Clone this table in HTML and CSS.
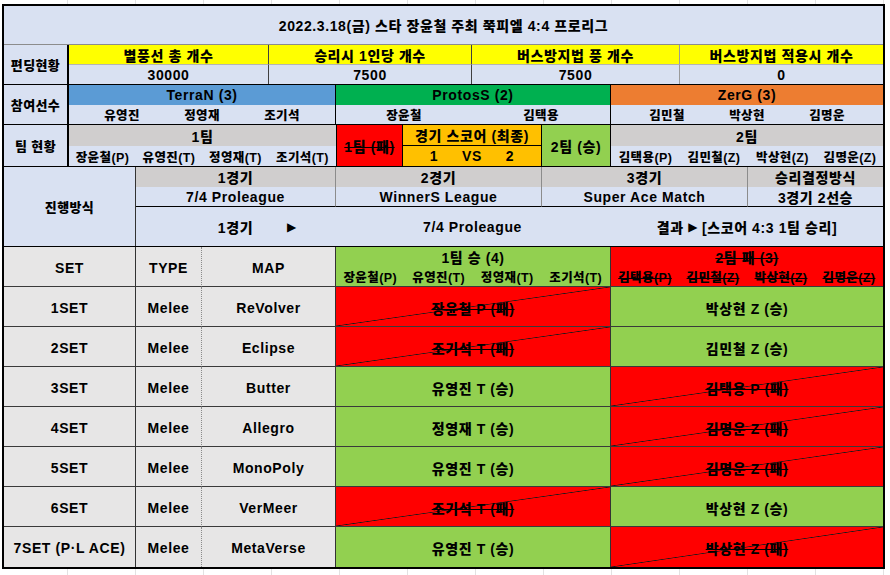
FILE: index.html
```html
<!DOCTYPE html>
<html lang="ko">
<head>
<meta charset="utf-8">
<title>쭉피엘 4:4 프로리그</title>
<link rel="stylesheet" href="styles.css">
</head>
<body>
<div class="sheet">
  <div class="title">2022.3.18(금) 스타 장윤철 주최 쭉피엘 4:4 프로리그</div>

  <div class="band h40">
    <div class="label">편딩현황</div>
    <div class="grid g12 rows-a">
      <div class="cell s3 yellow sep">별풍선 총 개수</div>
      <div class="cell s3 yellow sep">승리시 1인당 개수</div>
      <div class="cell s3 yellow sep-l">버스방지법 풍 개수</div>
      <div class="cell s3 yellow">버스방지법 적용시 개수</div>
      <div class="cell s3 sep">30000</div>
      <div class="cell s3 sep">7500</div>
      <div class="cell s3 sep-l">7500</div>
      <div class="cell s3">0</div>
    </div>
  </div>

  <div class="band h40">
    <div class="label">참여선수</div>
    <div class="grid g12 rows-a">
      <div class="cell s4 terran sep-k">TerraN (3)</div>
      <div class="cell s4 protoss sep-k">ProtosS (2)</div>
      <div class="cell s4 zerg">ZerG (3)</div>
      <div class="cell s4 trio nm sep-k"><span>유영진</span><span>정영재</span><span>조기석</span></div>
      <div class="cell s2 nm">장윤철</div>
      <div class="cell s2 nm sep-k">김택용</div>
      <div class="cell s4 trio nm"><span>김민철</span><span>박상현</span><span>김명운</span></div>
    </div>
  </div>

  <div class="band h42">
    <div class="label">팀 현황</div>
    <div class="grid g12 rows-b">
      <div class="cell s4 gray">1팀</div>
      <div class="cell rs2 red box-l"><span class="strike">1팀 (패)</span></div>
      <div class="cell s2 orange box score-hd">경기 스코어 (최종)</div>
      <div class="cell rs2 green box">2팀 (승)</div>
      <div class="cell s4 gray">2팀</div>
      <div class="cell nm">장윤철(P)</div>
      <div class="cell nm">유영진(T)</div>
      <div class="cell nm">정영재(T)</div>
      <div class="cell nm">조기석(T)</div>
      <div class="cell s2 orange box vs"><span>1</span><span>VS</span><span>2</span></div>
      <div class="cell nm">김택용(P)</div>
      <div class="cell nm">김민철(Z)</div>
      <div class="cell nm">박상현(Z)</div>
      <div class="cell nm">김명운(Z)</div>
    </div>
  </div>

  <div class="band h80">
    <div class="label wide">진행방식</div>
    <div class="grid g11 rows-c">
      <div class="cell s3 gray sep-g">1경기</div>
      <div class="cell s3 gray sep-g">2경기</div>
      <div class="cell s3 gray sep-g">3경기</div>
      <div class="cell s2 gray">승리결정방식</div>
      <div class="cell s3 sep-g line-k">7/4 Proleague</div>
      <div class="cell s3 sep-g line-k">WinnerS League</div>
      <div class="cell s3 sep-g line-k">Super Ace Match</div>
      <div class="cell s2 line-k">3경기 2선승</div>
      <div class="cell"></div>
      <div class="cell">1경기</div>
      <div class="cell arrow-cell"><span class="tri">▶</span></div>
      <div class="cell"></div>
      <div class="cell s2">7/4 Proleague</div>
      <div class="cell"></div>
      <div class="cell s4">결과&nbsp;<span class="tri">▶</span>&nbsp;[스코어 4:3 1팀 승리]</div>
    </div>
  </div>

  <div class="sets">
    <div class="cell c-set">SET</div>
    <div class="cell c-type">TYPE</div>
    <div class="cell c-map">MAP</div>
    <div class="cell t1 green team-hd">
      <div class="th">1팀 승 (4)</div>
      <div class="names4 nm"><span>장윤철(P)</span><span>유영진(T)</span><span>정영재(T)</span><span>조기석(T)</span></div>
    </div>
    <div class="cell red team-hd">
      <div class="th"><span class="strike">2팀 패 (3)</span></div>
      <div class="names4 nm"><span class="strike">김택용(P)</span><span class="strike">김민철(Z)</span><span class="strike">박상현(Z)</span><span class="strike">김명운(Z)</span></div>
    </div>

    <div class="cell c-set">1SET</div>
    <div class="cell c-type">Melee</div>
    <div class="cell c-map">ReVolver</div>
    <div class="cell t1 loss"><span class="strike">장윤철 P (패)</span></div>
    <div class="cell win">박상현 Z (승)</div>

    <div class="cell c-set">2SET</div>
    <div class="cell c-type">Melee</div>
    <div class="cell c-map">Eclipse</div>
    <div class="cell t1 loss"><span class="strike">조기석 T (패)</span></div>
    <div class="cell win">김민철 Z (승)</div>

    <div class="cell c-set">3SET</div>
    <div class="cell c-type">Melee</div>
    <div class="cell c-map">Butter</div>
    <div class="cell t1 win">유영진 T (승)</div>
    <div class="cell loss"><span class="strike">김택용 P (패)</span></div>

    <div class="cell c-set">4SET</div>
    <div class="cell c-type">Melee</div>
    <div class="cell c-map">Allegro</div>
    <div class="cell t1 win">정영재 T (승)</div>
    <div class="cell loss"><span class="strike">김명운 Z (패)</span></div>

    <div class="cell c-set">5SET</div>
    <div class="cell c-type">Melee</div>
    <div class="cell c-map">MonoPoly</div>
    <div class="cell t1 win">유영진 T (승)</div>
    <div class="cell loss"><span class="strike">김명운 Z (패)</span></div>

    <div class="cell c-set">6SET</div>
    <div class="cell c-type">Melee</div>
    <div class="cell c-map">VerMeer</div>
    <div class="cell t1 loss"><span class="strike">조기석 T (패)</span></div>
    <div class="cell win">박상현 Z (승)</div>

    <div class="cell c-set last">7SET (P·L ACE)</div>
    <div class="cell c-type last">Melee</div>
    <div class="cell c-map last">MetaVerse</div>
    <div class="cell t1 win last">유영진 T (승)</div>
    <div class="cell loss last"><span class="strike">박상현 Z (패)</span></div>
  </div>
</div>
</body>
</html>
```

FILE: styles.css
```css
* { box-sizing: border-box; margin: 0; padding: 0; }
html { background: #ffffff; }
body {
  width: 890px;
  height: 575px;
  overflow: hidden;
  padding-top: 4px;
  background: repeating-linear-gradient(to right, transparent 0 67px, #e2e2e2 67px 68px);
  font-family: "Liberation Sans", "Noto Sans CJK KR", sans-serif;
  font-weight: 800;
  font-size: 14px;
  letter-spacing: 0.6px;
  color: #000;
  white-space: nowrap;
}
.sheet {
  width: 883px;
  margin-left: 2px;
  border: 2px solid #000;
  background: #d9e1f2;
}
.title {
  height: 39px;
  display: flex;
  align-items: center;
  justify-content: center;
  border-bottom: 1px solid #8c8c8c;
}
.band { display: flex; border-bottom: 1px solid #000; }
.h40 { height: 40px; }
.h42 { height: 42px; }
.h80 { height: 80px; }
.label {
  width: 65px;
  flex: none;
  border-right: 2px solid #000;
  display: flex;
  align-items: center;
  justify-content: center;
  font-size: 13px;
  letter-spacing: 0.4px;
}
.label.wide { width: 132px; border-right: 1px solid #333; }
.grid { display: grid; flex: 1; }
.g12 { grid-template-columns: 67px 66px 67px 67px 67px 69px 70px 69px 69px 68px 69px 66px; }
.g11 { grid-template-columns: 66px 67px 67px 67px 69px 70px 69px 69px 68px 69px 66px; }
.rows-a { grid-template-rows: 20px 19px; }
.rows-b { grid-template-rows: 21px 20px; }
.rows-c { grid-template-rows: 20px 20px 39px; }
.cell { display: flex; align-items: center; justify-content: center; min-width: 0; }
.s2 { grid-column: span 2; }
.s3 { grid-column: span 3; }
.s4 { grid-column: span 4; }
.rs2 { grid-row: span 2; }
.nm { font-size: 12.5px; letter-spacing: 0.4px; }

.sep { border-right: 1px solid #404040; }
.sep-l { border-right: 1px solid #9a9a9a; }
.sep-k { border-right: 1px solid #000; }
.sep-g { border-right: 1px solid #8c8c8c; }
.line-k { border-bottom: 1px solid #000; }

.yellow { background: #ffff00; border-bottom: 1px solid #b4b4b4; }
.terran { background: #5b9bd5; }
.protoss { background: #00b050; }
.zerg { background: #ed7d31; }
.gray { background: #d0cece; }
.red { background: #ff0000; }
.green { background: #92d050; }
.orange { background: #ffc000; }
.box { border-right: 1px solid #000; }
.box-l { border-left: 1px solid #000; border-right: 1px solid #000; }
.score-hd { border-bottom: 1px solid #000; }
.vs span { width: 38px; text-align: center; }
.trio span { width: 80px; text-align: center; }

.strike { text-decoration: line-through; text-decoration-thickness: 1px; }
.tri { font-family: "DejaVu Sans", sans-serif; font-size: 12px; letter-spacing: 0; }
.arrow-cell { justify-content: flex-start; padding-left: 18px; }

.sets {
  display: grid;
  grid-template-columns: 132px 66px 134px 275px 272px;
  grid-auto-rows: 40px;
  background: #e7e6e6;
}
.sets > .cell { border-bottom: 1px solid #3a3a3a; padding-top: 2px; }
.sets > .cell.last { border-bottom: 0; }
.sets > .team-hd { padding-top: 0; }
.c-set { border-right: 1px solid #333; }
.c-type { border-right: 1px dotted #8a8a8a; }
.c-map { border-right: 1px solid #333; }
.t1 { border-right: 1px solid #333; }
.team-hd { flex-direction: column; align-items: stretch; }
.th { height: 20px; display: flex; align-items: center; justify-content: center; }
.names4 { height: 19px; display: grid; grid-template-columns: repeat(4, 1fr); align-items: center; }
.names4 span { text-align: center; }
.win { background: #92d050; }
.loss {
  background:
    linear-gradient(to bottom right, transparent calc(50% - 0.7px), #1a1a1a 50%, transparent calc(50% + 0.7px)),
    #ff0000;
}
```
